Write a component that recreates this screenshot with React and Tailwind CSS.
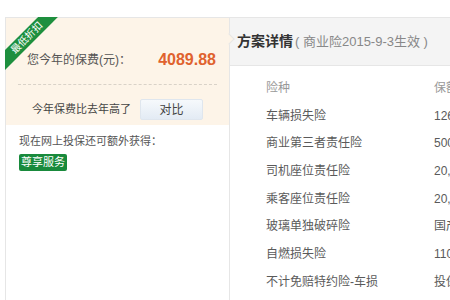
const font = { fontFamily: '"Liberation Sans", "Noto Sans CJK SC", sans-serif' };

const rows = [
  ['车辆损失险', '126,800.00'],
  ['商业第三者责任险', '500,000.00'],
  ['司机座位责任险', '20,000.00'],
  ['乘客座位责任险', '20,000.00/座'],
  ['玻璃单独破碎险', '国产玻璃'],
  ['自燃损失险', '110,000.00'],
  ['不计免赔特约险-车损', '投保'],
];

export default function App() {
  return (
    <div
      className="w-[450px] h-[300px] overflow-hidden bg-white flex pt-[17px] pl-[5px]"
      style={font}
    >
      {/* left: premium summary */}
      <div className="relative w-[225px] h-[300px] shrink-0 border border-[#e6e6e6]">
        <div className="bg-[#fdf4e8] h-[107px]">
          <div className="flex items-center justify-between pl-[21px] pr-[13px] pt-[32px] h-[52px]">
            <span className="text-[12px] text-[#555]">您今年的保费(元)：</span>
            <span className="text-[16px] font-bold text-[#e0622e]">4089.88</span>
          </div>
          <div className="mx-[12px] mt-[14px] border-t border-dashed border-[#d9d2c8]" />
          <div className="flex items-center pl-[26px] pt-[14px]">
            <span className="w-[108px] text-[11px] text-[#444]">今年保费比去年高了</span>
            <button className="w-[63px] h-[21px] text-[12px] text-[#444] rounded-[2px] border border-[#dfe6ee] bg-gradient-to-b from-[#f6f9fc] to-[#e3ebf4]">
              对比
            </button>
          </div>
        </div>
        <div className="pl-[13px] pt-[8px]">
          <div className="text-[11px] leading-[16px] text-[#555]">现在网上投保还可额外获得：</div>
          <div className="mt-[4px] inline-flex items-center h-[17px] px-[2px] rounded-[2px] bg-[#198a3c] text-[11px] text-white">
            尊享服务
          </div>
        </div>

        {/* corner ribbon */}
        <div className="absolute -top-px -left-px w-[60px] h-[60px] overflow-hidden">
          <div className="absolute left-[-24px] top-[14px] w-[92px] h-[14px] -rotate-45 bg-[#1e8f3e] flex items-center justify-center text-[10px] leading-none text-white">
            最低折扣
          </div>
        </div>
      </div>

      {/* right: plan detail */}
      <div className="relative flex-1 min-w-0 border-t border-[#e6e6e6]">
        <div className="h-[48px] bg-[#f4f4f4] border-b border-[#e6e6e6] flex items-center pl-[7px]">
          <span className="text-[14px] font-bold text-[#333]">方案详情</span>
          <span className="text-[13px] text-[#888] ml-[2px] whitespace-pre">( 商业险2015-9-3生效 )</span>
        </div>
        <div className="absolute left-[-5px] top-[17px] w-[8px] h-[8px] rotate-45 bg-[#fdf4e8] border-t border-r border-[#e6e6e6]" />

        <div className="pt-[8px]">
          <div className="flex items-center h-[27.7px] text-[12px] text-[#999] whitespace-nowrap">
            <span className="w-[204px] pl-[36px] shrink-0">险种</span>
            <span>保额</span>
          </div>
          {rows.map(([name, amount]) => (
            <div key={name} className="flex items-center h-[27.7px] text-[12px] text-[#5a5a5a] whitespace-nowrap">
              <span className="w-[204px] pl-[36px] shrink-0">{name}</span>
              <span>{amount}</span>
            </div>
          ))}
        </div>
      </div>
    </div>
  );
}
